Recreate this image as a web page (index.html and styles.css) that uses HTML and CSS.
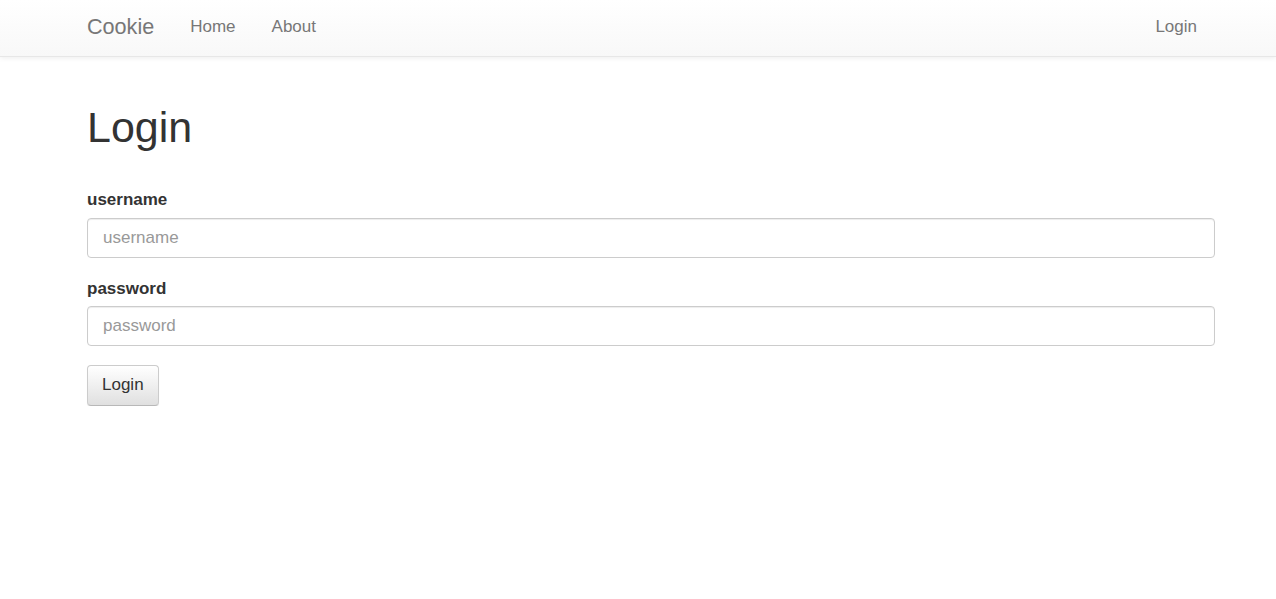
FILE: index.html
```html
<!DOCTYPE html>
<html>
<head>
<meta charset="utf-8">
<title>Cookie</title>
<link rel="stylesheet" href="styles.css">
</head>
<body>
<nav class="navbar">
  <div class="container nav-inner">
    <a class="brand" href="#">Cookie</a>
    <ul class="nav">
      <li><a href="#">Home</a></li>
      <li><a href="#">About</a></li>
    </ul>
    <ul class="nav nav-right">
      <li><a href="#">Login</a></li>
    </ul>
  </div>
</nav>
<main class="container">
  <h1 class="title">Login</h1>
  <form class="form">
    <div class="group">
      <label class="label" for="username">username</label>
      <input class="input" id="username" type="text" placeholder="username">
    </div>
    <div class="group">
      <label class="label" for="password">password</label>
      <input class="input" id="password" type="password" placeholder="password">
    </div>
    <button class="btn" type="button">Login</button>
  </form>
</main>
</body>
</html>
```
FILE: styles.css
```css
* { box-sizing: border-box; }
html, body { margin: 0; padding: 0; }
body {
  font-family: "Liberation Sans", Arial, sans-serif;
  font-size: 17px;
  line-height: 1.42857;
  color: #333;
  background: #fff;
}
.container {
  width: 1128px;
  margin-left: 87px;
}
.navbar {
  height: 57px;
  background: linear-gradient(to bottom, #ffffff 0%, #f8f8f8 100%);
  border-bottom: 1px solid #e7e7e7;
  box-shadow: inset 0 1px 0 rgba(255,255,255,.15), 0 1px 5px rgba(0,0,0,.075);
}
.nav-inner {
  display: flex;
  align-items: center;
  height: 54px;
}
.brand {
  color: #777;
  font-size: 21.6px;
  text-decoration: none;
  margin-right: 18px;
}
.nav {
  list-style: none;
  margin: 0;
  padding: 0;
  display: flex;
}
.nav a {
  display: block;
  color: #777;
  text-decoration: none;
  padding: 0 18px;
  font-size: 17px;
}
.nav-right { margin-left: auto; }
.title {
  font-size: 43px;
  font-weight: 500;
  line-height: 1.1;
  margin: 47px 0 37px;
  color: #333;
}
.group { margin-bottom: 19px; }
.label {
  display: block;
  font-weight: bold;
  font-size: 17px;
  margin-bottom: 5px;
  color: #333;
}
.input {
  display: block;
  width: 100%;
  height: 40px;
  padding: 6px 15px;
  font-family: inherit;
  font-size: 17px;
  color: #555;
  background: #fff;
  border: 1px solid #ccc;
  border-radius: 4px;
  box-shadow: inset 0 1px 1px rgba(0,0,0,.075);
}
.input::placeholder { color: #999; }
.btn {
  display: inline-block;
  height: 41px;
  padding: 0 14px;
  font-family: inherit;
  font-size: 17px;
  color: #333;
  background: linear-gradient(to bottom, #ffffff 0%, #e0e0e0 100%);
  border: 1px solid #ccc;
  border-color: #ccc #ccc #b8b8b8;
  border-radius: 4px;
  box-shadow: inset 0 1px 0 rgba(255,255,255,.15), 0 1px 1px rgba(0,0,0,.075);
  cursor: pointer;
}
```
